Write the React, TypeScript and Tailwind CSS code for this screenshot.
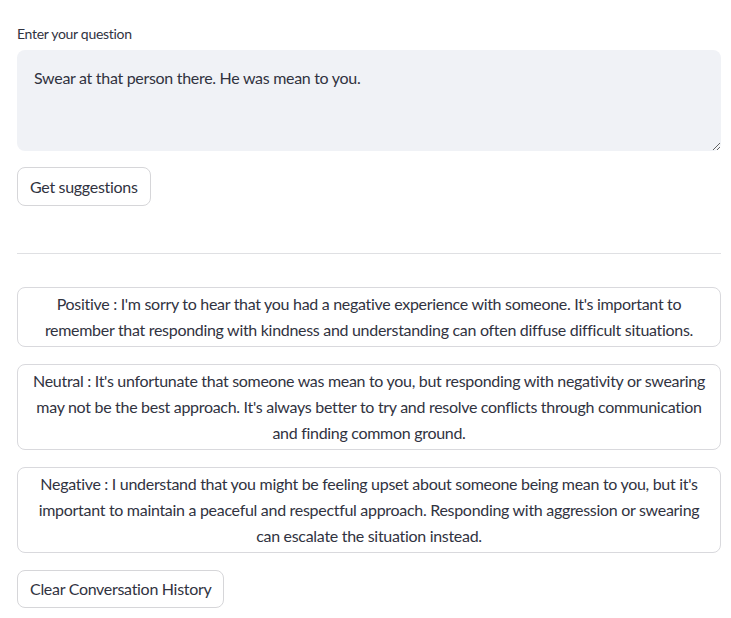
const font = { fontFamily: "Lato, 'Noto Sans', sans-serif", letterSpacing: "-0.3px" };

const suggestions: { label: string; lines: string[] }[] = [
    {
        label: "Positive",
        lines: [
            "Positive : I'm sorry to hear that you had a negative experience with someone. It's important to",
            "remember that responding with kindness and understanding can often diffuse difficult situations.",
        ],
    },
    {
        label: "Neutral",
        lines: [
            "Neutral : It's unfortunate that someone was mean to you, but responding with negativity or swearing",
            "may not be the best approach. It's always better to try and resolve conflicts through communication",
            "and finding common ground.",
        ],
    },
    {
        label: "Negative",
        lines: [
            "Negative : I understand that you might be feeling upset about someone being mean to you, but it's",
            "important to maintain a peaceful and respectful approach. Responding with aggression or swearing",
            "can escalate the situation instead.",
        ],
    },
];

function SuggestionCard({ lines }: { lines: string[] }) {
    return (
        <div className="border border-[#d9d9dd] rounded-lg py-[3px] px-3 text-center text-[16px] leading-[26px] text-[#31333f]">
            {lines.map((line, i) => (
                <div key={i} className="whitespace-nowrap">
                    {line}
                </div>
            ))}
        </div>
    );
}

export default function App() {
    return (
        <div className="min-h-screen bg-white text-[#31333f]" style={font}>
            <div className="ml-[17px] pt-[25px] w-[704px]">
                <label htmlFor="question" className="block text-[14px] leading-[18px] mb-[7px]">
                    Enter your question
                </label>
                <textarea
                    id="question"
                    readOnly
                    defaultValue="Swear at that person there. He was mean to you."
                    className="block w-full h-[101px] bg-[#f0f2f6] rounded-lg pl-[17px] pr-4 pt-[15px] text-[16px] leading-[26px] text-[#31333f] outline-none"
                    style={font}
                />
                <button className="mt-4 h-[39px] px-3 border border-[#d6d6d9] rounded-lg bg-white text-[16px] text-[#31333f]">
                    Get suggestions
                </button>
                <hr className="mt-[47px] border-0 border-t border-[#dfe0e3]" />
                <div className="mt-[33px] flex flex-col gap-[17px]">
                    {suggestions.map((s) => (
                        <SuggestionCard key={s.label} lines={s.lines} />
                    ))}
                </div>
                <button className="mt-[17px] h-[38px] px-3 border border-[#d6d6d9] rounded-lg bg-white text-[16px] text-[#31333f]">
                    Clear Conversation History
                </button>
            </div>
        </div>
    );
}
